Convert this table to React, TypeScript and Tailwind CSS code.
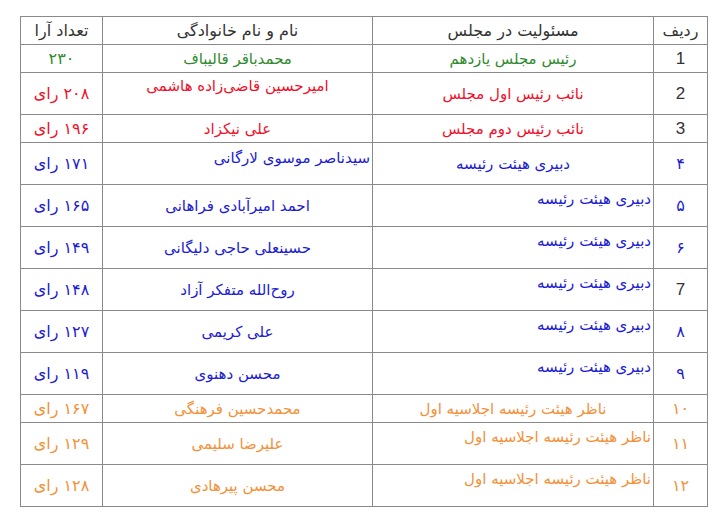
import React from 'react';

type Row = {
  num: string;
  latin?: boolean;
  role: string;
  roleAlign: 'center' | 'top';
  name: string;
  nameAlign: 'center' | 'topCenter' | 'topRight';
  votes: string;
  color: string;
  h: string;
};

const rows: Row[] = [
  { num: '1', latin: true, role: 'رئیس مجلس یازدهم', roleAlign: 'center', name: 'محمدباقر قالیباف', nameAlign: 'center', votes: '۲۳۰', color: 'text-[#2f8a2f]', h: 'h-[28px]' },
  { num: '2', latin: true, role: 'نائب رئیس اول مجلس', roleAlign: 'center', name: 'امیرحسین قاضی‌زاده هاشمی', nameAlign: 'topCenter', votes: '۲۰۸ رای', color: 'text-[#f0102a]', h: 'h-[42px]' },
  { num: '3', latin: true, role: 'نائب رئیس دوم مجلس', roleAlign: 'center', name: 'علی نیکزاد', nameAlign: 'center', votes: '۱۹۶ رای', color: 'text-[#f0102a]', h: 'h-[28px]' },
  { num: '۴', role: 'دبیری هیئت رئیسه', roleAlign: 'center', name: 'سیدناصر موسوی لارگانی', nameAlign: 'topRight', votes: '۱۷۱ رای', color: 'text-[#1c1cd0]', h: 'h-[42px]' },
  { num: '۵', role: 'دبیری هیئت رئیسه', roleAlign: 'top', name: 'احمد امیرآبادی فراهانی', nameAlign: 'center', votes: '۱۶۵ رای', color: 'text-[#1c1cd0]', h: 'h-[42px]' },
  { num: '۶', role: 'دبیری هیئت رئیسه', roleAlign: 'top', name: 'حسینعلی حاجی دلیگانی', nameAlign: 'center', votes: '۱۴۹ رای', color: 'text-[#1c1cd0]', h: 'h-[42px]' },
  { num: '7', latin: true, role: 'دبیری هیئت رئیسه', roleAlign: 'top', name: 'روح‌الله متفکر آزاد', nameAlign: 'center', votes: '۱۴۸ رای', color: 'text-[#1c1cd0]', h: 'h-[42px]' },
  { num: '۸', role: 'دبیری هیئت رئیسه', roleAlign: 'top', name: 'علی کریمی', nameAlign: 'center', votes: '۱۲۷ رای', color: 'text-[#1c1cd0]', h: 'h-[42px]' },
  { num: '۹', role: 'دبیری هیئت رئیسه', roleAlign: 'top', name: 'محسن دهنوی', nameAlign: 'center', votes: '۱۱۹ رای', color: 'text-[#1c1cd0]', h: 'h-[42px]' },
  { num: '۱۰', role: 'ناظر هیئت رئیسه اجلاسیه اول', roleAlign: 'center', name: 'محمدحسین فرهنگی', nameAlign: 'center', votes: '۱۶۷ رای', color: 'text-[#f3913a]', h: 'h-[28px]' },
  { num: '۱۱', role: 'ناظر هیئت رئیسه اجلاسیه اول', roleAlign: 'top', name: 'علیرضا سلیمی', nameAlign: 'center', votes: '۱۲۹ رای', color: 'text-[#f3913a]', h: 'h-[42px]' },
  { num: '۱۲', role: 'ناظر هیئت رئیسه اجلاسیه اول', roleAlign: 'top', name: 'محسن پیرهادی', nameAlign: 'center', votes: '۱۲۸ رای', color: 'text-[#f3913a]', h: 'h-[42px]' },
];

const cell = 'border border-[#8a8a8a] p-0 leading-[24px]';

const App = () => {
  return (
    <div className="min-h-screen bg-white pt-4 pl-5 font-['DejaVu_Sans',sans-serif] text-[15px]">
      <table dir="rtl" className="w-[687px] table-fixed border-collapse border border-[#222]">
        <colgroup>
          <col className="w-[54px]" />
          <col className="w-[281px]" />
          <col className="w-[270px]" />
          <col className="w-[82px]" />
        </colgroup>
        <thead>
          <tr className="h-[28px] text-[#333] text-[16px]">
            <th className={`${cell} font-normal text-center`}>ردیف</th>
            <th className={`${cell} font-normal text-center`}>مسئولیت در مجلس</th>
            <th className={`${cell} font-normal text-center`}>نام و نام خانوادگی</th>
            <th className={`${cell} font-normal text-center`}>تعداد آرا</th>
          </tr>
        </thead>
        <tbody>
          {rows.map((r) => (
            <tr key={r.num} className={r.h}>
              <td className={`${cell} text-center align-middle ${r.latin ? "text-[#333] font-['Liberation_Sans',sans-serif] text-[17px]" : `${r.color} text-[16px]`}`}>
                {r.num}
              </td>
              <td
                className={`${cell} ${r.color} ${
                  r.roleAlign === 'center' ? 'text-center align-middle' : 'text-right align-top pr-0.5 pt-[2px]'
                }`}
              >
                {r.role}
              </td>
              <td
                className={`${cell} ${r.color} ${
                  r.nameAlign === 'center'
                    ? 'text-center align-middle'
                    : r.nameAlign === 'topCenter'
                    ? 'text-center align-top pt-[1px]'
                    : 'text-right align-top pr-0.5 pt-[3px]'
                }`}
              >
                {r.name}
              </td>
              <td className={`${cell} ${r.color} text-center align-middle text-[16px]`}>{r.votes}</td>
            </tr>
          ))}
        </tbody>
      </table>
    </div>
  );
};

export default App;
